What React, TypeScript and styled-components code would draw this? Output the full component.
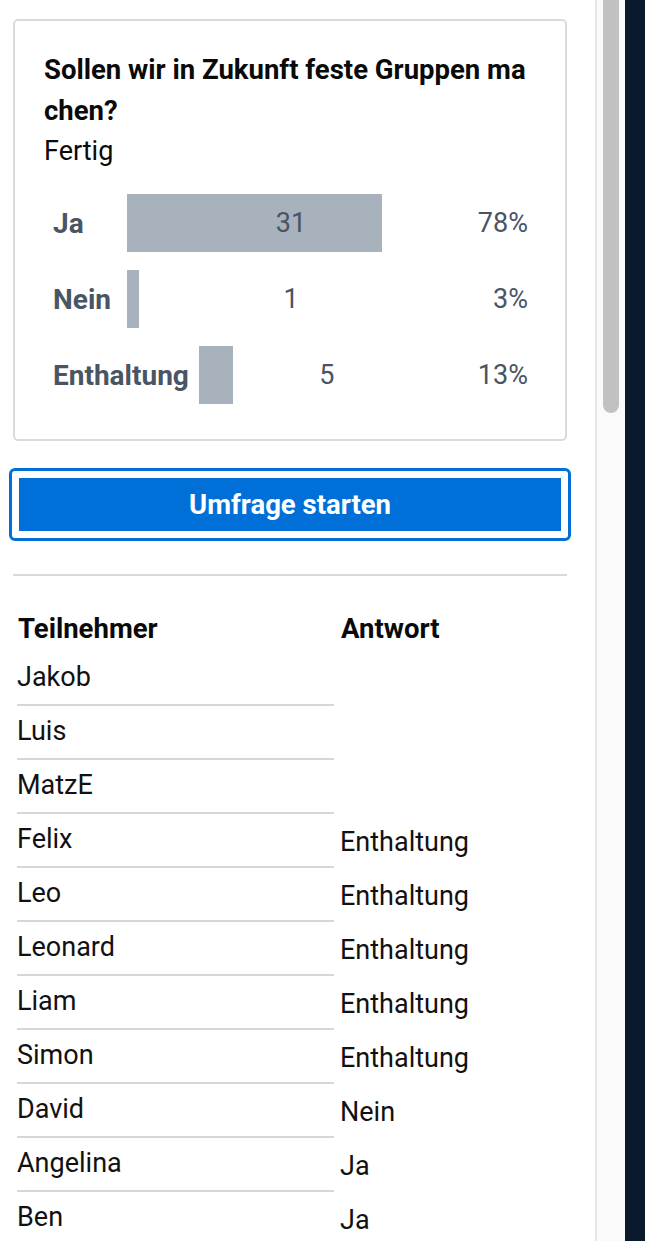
import React from 'react';
import styled, { createGlobalStyle } from 'styled-components';

const GlobalStyle = createGlobalStyle`
  html, body {
    margin: 0;
    padding: 0;
    height: 100%;
    overflow: hidden;
    background: #ffffff;
  }
  body {
    font-family: Roboto, "Liberation Sans", sans-serif;
    color: #0d0d0d;
  }
`;

const results = [
  { label: 'Ja', count: 31, percent: 78, fill: 77.7 },
  { label: 'Nein', count: 1, percent: 3, fill: 3.7 },
  { label: 'Enthaltung', count: 5, percent: 13, fill: 13.3 },
];

const participants = [
  { name: 'Jakob', answer: '' },
  { name: 'Luis', answer: '' },
  { name: 'MatzE', answer: '' },
  { name: 'Felix', answer: 'Enthaltung' },
  { name: 'Leo', answer: 'Enthaltung' },
  { name: 'Leonard', answer: 'Enthaltung' },
  { name: 'Liam', answer: 'Enthaltung' },
  { name: 'Simon', answer: 'Enthaltung' },
  { name: 'David', answer: 'Nein' },
  { name: 'Angelina', answer: 'Ja' },
  { name: 'Ben', answer: 'Ja' },
];

const App = () => {
  return (
    <Page>
      <GlobalStyle />
      <Panel>
        <Card>
          <Title>
            Sollen wir in Zukunft feste Gruppen ma
            <br />
            chen?
          </Title>
          <Status>Fertig</Status>
          <Results>
            {results.map((r) => (
              <ResultRow key={r.label}>
                <ResultLabel>{r.label}</ResultLabel>
                <BarTrack>
                  <BarFill style={{ width: `${r.fill}%` }} />
                  <Count>{r.count}</Count>
                </BarTrack>
                <Percent>{r.percent}%</Percent>
              </ResultRow>
            ))}
          </Results>
        </Card>

        <ButtonFrame>
          <StartButton type="button">Umfrage starten</StartButton>
        </ButtonFrame>

        <Divider />

        <Table>
          <HeadCell>Teilnehmer</HeadCell>
          <HeadCell>Antwort</HeadCell>
          {participants.map((p) => (
            <React.Fragment key={p.name}>
              <NameCell>{p.name}</NameCell>
              <AnswerCell>{p.answer}</AnswerCell>
            </React.Fragment>
          ))}
        </Table>
      </Panel>
      <ScrollTrack>
        <ScrollThumb />
      </ScrollTrack>
      <EdgeStrip />
    </Page>
  );
};

const Page = styled.div`
  display: flex;
  height: 100vh;
  overflow: hidden;
`;

const Panel = styled.main`
  flex: 1;
  min-width: 0;
  padding: 19px 28px 0 13px;
`;

const Card = styled.section`
  border: 2px solid #d6dbe0;
  border-radius: 5px;
  padding: 28px 29px 35px 29px;
`;

const Title = styled.h2`
  margin: 0;
  font-size: 27.5px;
  font-weight: 700;
  line-height: 41px;
  color: #0a0a0a;
`;

const Status = styled.p`
  margin: 0;
  font-size: 27px;
  line-height: 41px;
  color: #0a0a0a;
`;

const Results = styled.div`
  margin-top: 22px;
  display: flex;
  flex-direction: column;
  gap: 18px;
`;

const ResultRow = styled.div`
  display: flex;
  height: 58px;
  color: #4a5563;
`;

const ResultLabel = styled.span`
  display: flex;
  align-items: center;
  box-sizing: border-box;
  min-width: 83px;
  padding: 0 10px 0 9px;
  font-size: 28px;
  font-weight: 700;
`;

const BarTrack = styled.div`
  flex: 1;
  display: grid;
`;

const BarFill = styled.div`
  grid-area: 1 / 1;
  justify-self: start;
  height: 100%;
  background: #a7b2bc;
`;

const Count = styled.span`
  grid-area: 1 / 1;
  place-self: center;
  font-size: 27px;
`;

const Percent = styled.span`
  display: flex;
  align-items: center;
  justify-content: flex-end;
  box-sizing: border-box;
  width: 81px;
  padding-right: 8px;
  font-size: 27px;
`;

const ButtonFrame = styled.div`
  margin: 27px -4px 0;
  border: 3px solid #0070d8;
  border-radius: 6px;
  padding: 7px;
`;

const StartButton = styled.button`
  display: block;
  width: 100%;
  height: 53px;
  padding: 0;
  border: 0;
  border-radius: 0;
  background: #0070d8;
  color: #ffffff;
  font-family: inherit;
  font-size: 27.5px;
  font-weight: 700;
  cursor: pointer;
`;

const Divider = styled.hr`
  margin: 33px 0 0;
  border: 0;
  height: 2px;
  background: #d7dbdf;
`;

const Table = styled.div`
  margin-top: 29px;
  padding-left: 4px;
  display: grid;
  grid-template-columns: 317px 1fr;
  column-gap: 6px;
  font-size: 27px;
  line-height: 38px;
  color: #111111;
`;

const HeadCell = styled.div`
  padding: 5px 0 4px 1px;
  font-size: 27.5px;
  font-weight: 700;
  color: #0a0a0a;
`;

const NameCell = styled.div`
  padding: 6px 0 8px 0;
  border-bottom: 2px solid #d3d7db;
`;

const AnswerCell = styled.div`
  padding: 9px 0 5px 0;
`;

const ScrollTrack = styled.div`
  width: 28px;
  flex-shrink: 0;
  background: #fafafa;
  border-left: 2px solid #e6e6e6;
`;

const ScrollThumb = styled.div`
  margin-left: 6px;
  width: 16px;
  height: 413px;
  background: #c1c1c1;
  border-radius: 0 0 8px 8px;
`;

const EdgeStrip = styled.div`
  width: 20px;
  flex-shrink: 0;
  background: #0a192c;
`;

export default App;
